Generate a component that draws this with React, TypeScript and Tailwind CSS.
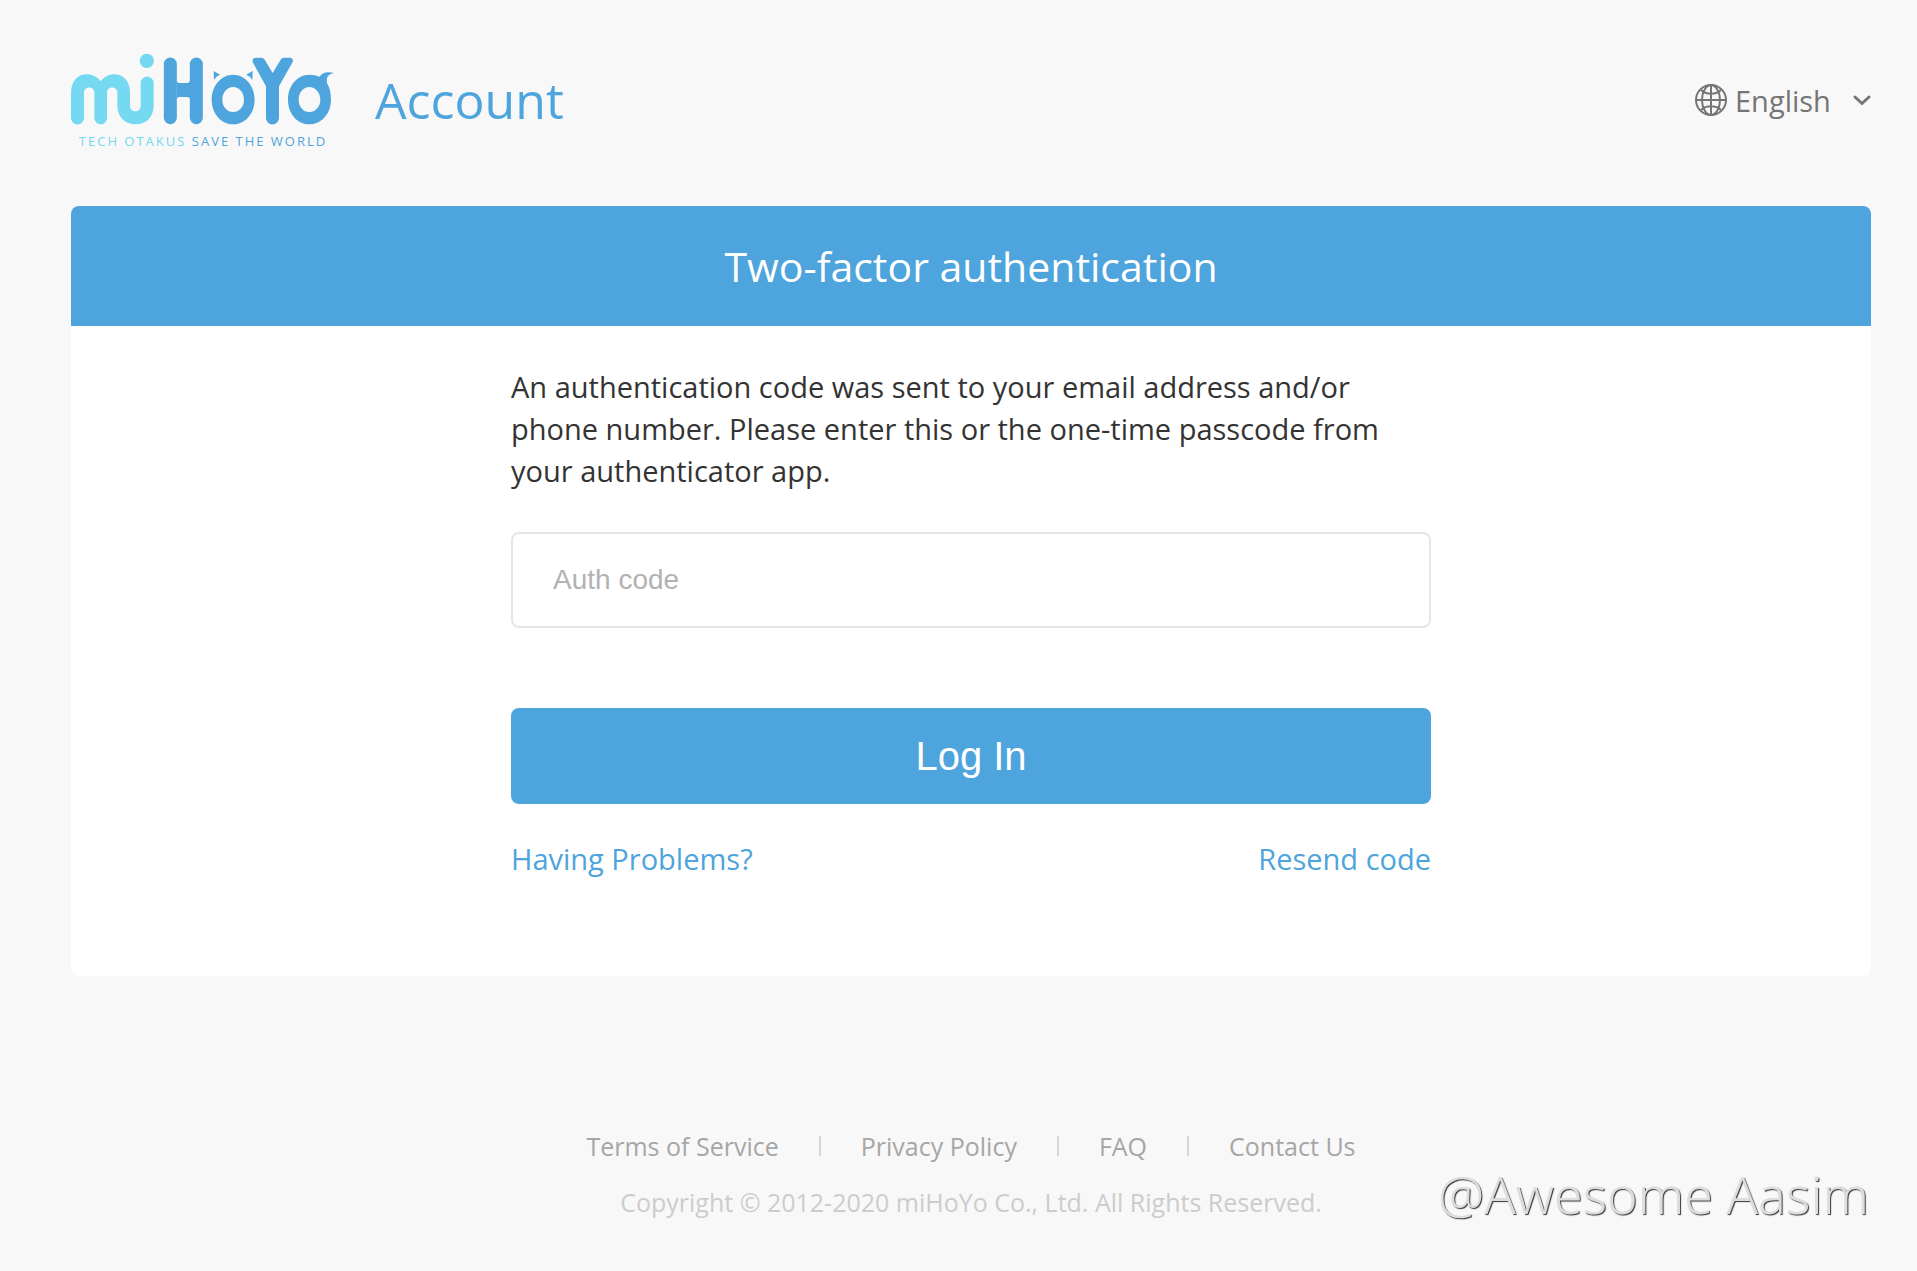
import React from "react";

const footerLinks = ["Terms of Service", "Privacy Policy", "FAQ", "Contact Us"];

function Logo() {
  return (
    <div className="flex w-[264px] flex-col items-center">
      <svg viewBox="33 36 792 218" className="block w-full" fill="none" aria-label="miHoYo" role="img">
        <path d="M33 160C33 125 52 103 80 103C97 103 112 111 122 124C132 111 146 103 163 103C190 103 210 125 210 155V197C210 219 242 219 242 197V129A19.500 19.500 0 0 1 281 129V197C281 230 258 253 227 253C196 253 172 230 172 197V158C172 137 141 137 141 158V234A19 19 0 0 1 103 234V158C103 137 72 137 72 158V234A19.500 19.500 0 0 1 33 234Z" fill="#74d9f1" />
        <circle cx="260.500" cy="62.500" r="21.500" fill="#74d9f1" />
        <path d="M331 72V233M409 72V233" stroke="#4ea4dc" strokeWidth="39" strokeLinecap="round" />
        <path d="M350 120Q350 129 359 129H381Q390 129 390 120V180Q390 171 381 171H359Q350 171 350 180Z" fill="#4ea4dc" />
        <path fillRule="evenodd" d="M519.500 104C555 104 584 137 584 179C584 221 555 253 519.500 253C484 253 455 221 455 179C455 137 484 104 519.500 104ZM519.500 141C501 141 487 158 487 179C487 200 501 216 519.500 216C538 216 552 200 552 179C552 158 538 141 519.500 141Z" fill="#4ea4dc" />
        <path d="M461 93L480 104Q467 109 462 120ZM578 93L559 104Q572 109 577 120Z" fill="#4ea4dc" />
        <path d="M578 66Q576 53 588 53H604Q610 53 613 58L638 99L663 58Q666 53 672 53H689Q701 53 698 66L657 139V234A19.500 19.500 0 0 1 618 234V139Z" fill="#4ea4dc" />
        <path fillRule="evenodd" d="M748 104C760 104 770 106 778 110C788 98 801 94 822 99C805 103 799 109 801 129C809 143 813 158 813 179C813 221 784 253 748 253C712 253 684 221 684 179C684 137 712 104 748 104ZM748 141C730 141 716 158 716 179C716 200 730 216 748 216C766 216 781 200 781 179C781 158 766 141 748 141Z" fill="#4ea4dc" />
      </svg>
      <p className="mt-2 text-[13px] leading-4 tracking-[2px] whitespace-nowrap text-[#4ea4dc]">
        <span className="text-[#74d9f1]">TECH OTAKUS</span> SAVE THE WORLD
      </p>
    </div>
  );
}

function Globe() {
  return (
    <svg viewBox="0 0 32 32" className="size-8" fill="none" stroke="#757575" strokeWidth="2" aria-hidden="true">
      <circle cx="16" cy="16" r="15" />
      <ellipse cx="16" cy="16" rx="9" ry="15" />
      <path d="M16 1V31M1 16H31M6 6C11 11 21 11 26 6M6 26C11 21 21 21 26 26" />
    </svg>
  );
}

export default function App() {
  return (
    <div className="relative min-h-screen bg-[#f8f8f8] pr-[46px] pl-[71px] font-['Open_Sans',sans-serif] text-[29px] text-[#333]">
      <header className="flex items-center justify-between pt-[52px] pb-[57px]">
        <div className="flex items-center gap-10">
          <Logo />
          <span className="text-[50px] leading-[68px] text-[#4ea4dc]">Account</span>
        </div>
        <label className="relative flex items-center gap-2 text-[#757575]">
          <Globe />
          <select aria-label="Language" className="appearance-none bg-transparent pr-10 outline-none">
            <option>English</option>
          </select>
          <svg viewBox="0 0 18 10" className="pointer-events-none absolute right-0 w-[18px]" fill="none" stroke="#757575" strokeWidth="3" strokeLinecap="round" strokeLinejoin="round" aria-hidden="true">
            <path d="M2 2L9 8.500L16 2" />
          </svg>
        </label>
      </header>

      <main className="overflow-hidden rounded-lg bg-white">
        <h1 className="bg-[#4ea4dc] py-[30px] text-center text-[41px] leading-[60px] text-white">Two-factor authentication</h1>
        <form className="mx-auto max-w-[920px] pt-10 pb-24" onSubmit={(e) => e.preventDefault()}>
          <p className="leading-[42px]">
            An authentication code was sent to your email address and/or phone number. Please enter this or the one-time passcode from your authenticator app.
          </p>
          <input
            type="text"
            aria-label="Auth code"
            placeholder="Auth code"
            className="mt-10 block h-24 w-full rounded-lg border-2 border-[#e6e6e6] px-10 font-['Liberation_Sans',sans-serif] text-[28px] outline-none placeholder:text-[#b2b2b2]"
          />
          <button type="submit" className="mt-20 block h-24 w-full rounded-lg bg-[#4ea4dc] font-['Liberation_Sans',sans-serif] text-[40px] text-white">
            Log In
          </button>
          <div className="mt-[34px] flex justify-between leading-[42px] text-[#4ea4dc]">
            <a href="#problems">Having Problems?</a>
            <a href="#resend">Resend code</a>
          </div>
        </form>
      </main>

      <footer className="pt-[150px] text-center text-[25px] leading-[40px]">
        <nav className="flex items-center justify-center text-[#a6a6a6]">
          {footerLinks.map((label, i) => (
            <React.Fragment key={label}>
              {i > 0 && <span className="mx-10 h-5 w-0.5 bg-[#d6d6d6]" />}
              <a href="#footer">{label}</a>
            </React.Fragment>
          ))}
        </nav>
        <p className="mt-4 text-[#ccc]">Copyright © 2012-2020 miHoYo Co., Ltd. All Rights Reserved.</p>
      </footer>

      <div className="absolute right-12 bottom-[41px] font-['Noto_Sans',sans-serif] text-[52px] leading-[72px] font-light text-[#ddd] [text-shadow:1px_1px_1px_#333]">
        @Awesome Aasim
      </div>
    </div>
  );
}
